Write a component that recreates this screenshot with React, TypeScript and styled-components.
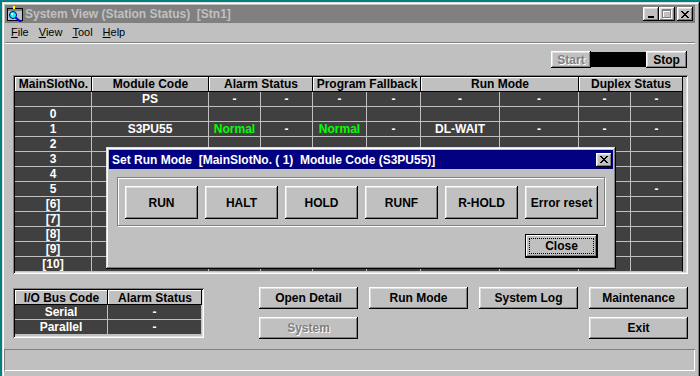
import React from 'react';
import styled, { createGlobalStyle, css } from 'styled-components';

const GlobalStyle = createGlobalStyle`
  html, body {
    margin: 0;
    padding: 0;
    background: #008080;
  }
  body {
    font-family: "Liberation Sans", Arial, sans-serif;
    font-size: 12px;
  }
  * {
    box-sizing: border-box;
  }
`;

const raised = css`
  box-shadow: inset -1px -1px #000, inset 1px 1px #fff, inset -2px -2px #808080,
    inset 2px 2px #dfdfdf;
`;

const sunken = css`
  box-shadow: inset 1px 1px #808080, inset -1px -1px #fff, inset 2px 2px #000,
    inset -2px -2px #dfdfdf;
`;

const Desktop = styled.div`
  position: relative;
  width: 700px;
  height: 376px;
  overflow: hidden;
  padding: 2px 0 0 2px;
`;

const Window = styled.div`
  width: 698px;
  height: 380px;
  padding: 3px 5px 3px 3px;
  background: #c0c0c0;
  display: flex;
  flex-direction: column;
  box-shadow: inset -1px -1px #000, inset 1px 1px #dfdfdf, inset -2px -2px #808080,
    inset 2px 2px #fff;
`;

const TitleBar = styled.div<{ $active?: boolean }>`
  height: 18px;
  flex: none;
  display: flex;
  align-items: center;
  padding-left: 2px;
  background: ${(p) => (p.$active ? '#000080' : '#808080')};
  color: ${(p) => (p.$active ? '#fff' : '#c0c0c0')};
  font-weight: bold;
  font-size: 12px;
  white-space: pre;
`;

const TitleText = styled.span`
  margin-left: 2px;
`;

const Controls = styled.div`
  margin-left: auto;
  margin-right: 2px;
  display: flex;
`;

const CtrlButton = styled.button<{ $gap?: boolean }>`
  width: 16px;
  height: 14px;
  padding: 0;
  border: none;
  background: #c0c0c0;
  display: flex;
  align-items: center;
  justify-content: center;
  margin-left: ${(p) => (p.$gap ? '2px' : '0')};
  ${raised};
`;

const MenuBar = styled.div`
  height: 19px;
  flex: none;
  display: flex;
  padding-left: 1px;
`;

const MenuItem = styled.span`
  padding: 0 5px;
  line-height: 19px;
  font-size: 11px;
  color: #000;
`;

const Mnemonic = styled.span`
  text-decoration: underline;
`;

const Separator = styled.div`
  height: 2px;
  flex: none;
  border-top: 1px solid #808080;
  border-bottom: 1px solid #fff;
`;

const Client = styled.div`
  height: 305px;
  flex: none;
  padding: 7px 2px 0 8px;
  display: flex;
  flex-direction: column;
`;

const Toolbar = styled.div`
  width: 675px;
  height: 17px;
  display: flex;
  justify-content: flex-end;
  align-items: center;
  padding-right: 1px;
`;

const WinButton = styled.button<{ $w: number; $h: number; $col?: number }>`
  width: ${(p) => p.$w}px;
  height: ${(p) => p.$h}px;
  padding: 0;
  border: none;
  background: #c0c0c0;
  color: #000;
  font-family: "Liberation Sans", Arial, sans-serif;
  font-weight: bold;
  font-size: 12px;
  grid-column: ${(p) => p.$col ?? 'auto'};
  ${raised};

  &:disabled {
    color: #808080;
    text-shadow: 1px 1px 0 #fff;
  }
`;

const Indicator = styled.div`
  width: 55px;
  height: 15px;
  background: #000;
`;

const TableFrame = styled.div`
  margin-top: 7px;
  width: 675px;
  height: 199px;
  padding: 2px;
  background: #c0c0c0;
  ${sunken};
`;

const Grid = styled.div<{ $cols: string }>`
  display: grid;
  grid-template-columns: ${(p) => p.$cols};
  grid-auto-rows: 15px;
`;

const HeadCell = styled.div<{ $span?: number }>`
  grid-column: span ${(p) => p.$span ?? 1};
  background: #c0c0c0;
  color: #000;
  font-weight: bold;
  font-size: 12px;
  line-height: 15px;
  text-align: center;
  white-space: nowrap;
  overflow: hidden;
  box-shadow: inset -1px -1px #000, inset 1px 1px #fff;
`;

const DataCell = styled.div<{ $ok?: boolean; $edge?: boolean }>`
  background: #404040;
  color: ${(p) => (p.$ok ? '#00ff00' : '#fff')};
  border-right: 1px solid ${(p) => (p.$edge ? '#000' : '#c0c0c0')};
  border-bottom: 1px solid #c0c0c0;
  font-weight: bold;
  font-size: 12px;
  line-height: 14px;
  text-align: center;
  white-space: nowrap;
`;

const Bottom = styled.div`
  width: 675px;
  margin-top: 13px;
  display: flex;
  justify-content: space-between;
  align-items: flex-start;
`;

const IoFrame = styled.div`
  margin-top: 1px;
  width: 191px;
  height: 50px;
  padding: 2px;
  background: #c0c0c0;
  ${sunken};
`;

const IoHead = styled(HeadCell)`
  line-height: 16px;
`;

const ButtonGrid = styled.div`
  display: grid;
  grid-template-columns: repeat(4, 99px);
  grid-auto-rows: 22px;
  column-gap: 11px;
  row-gap: 8px;
`;

const StatusBar = styled.div`
  height: 22px;
  flex: none;
  margin-left: -1px;
  box-shadow: inset 1px 1px #808080, inset -1px -1px #fff;
`;

const Dialog = styled.div`
  position: absolute;
  left: 106px;
  top: 147px;
  width: 510px;
  height: 122px;
  padding: 3px;
  background: #c0c0c0;
  display: flex;
  flex-direction: column;
  box-shadow: inset -1px -1px #000, inset 1px 1px #dfdfdf, inset -2px -2px #808080,
    inset 2px 2px #fff;
`;

const DialogTitle = styled(TitleBar)`
  height: 19px;
  padding-left: 3px;
`;

const DialogClose = styled(CtrlButton)`
  margin-left: auto;
  margin-right: 1px;
`;

const GroupBox = styled.div`
  margin: 8px 8px 0;
  padding: 8px 6px 6px 7px;
  border: 1px solid #808080;
  box-shadow: 1px 1px 0 #fff, inset 1px 1px 0 #fff;
  display: flex;
  gap: 7px;
`;

const DialogFooter = styled.div`
  margin: 8px 15px 0 0;
  display: flex;
  justify-content: flex-end;
`;

const DefaultButton = styled.button`
  width: 73px;
  height: 24px;
  padding: 3px;
  border: 1px solid #000;
  background: #c0c0c0;
  display: flex;
  box-shadow: inset -1px -1px #000, inset 1px 1px #fff, inset -2px -2px #808080;
`;

const FocusLabel = styled.span`
  flex: 1;
  display: flex;
  align-items: center;
  justify-content: center;
  border: 1px dotted #000;
  font-family: "Liberation Sans", Arial, sans-serif;
  font-weight: bold;
  font-size: 12px;
  color: #000;
`;

const X_PATTERN = ['11....11', '.11..11.', '..1111..', '...11...', '..1111..', '.11..11.', '11....11'];

const CloseGlyph = () => (
  <svg width="8" height="7" shapeRendering="crispEdges">
    {X_PATTERN.flatMap((row, y) =>
      row.split('').map((c, x) => (c === '1' ? <rect key={`${x}-${y}`} x={x} y={y} width="1" height="1" fill="#000" /> : null))
    )}
  </svg>
);

const MinGlyph = () => (
  <svg width="8" height="7" shapeRendering="crispEdges">
    <rect x="1" y="5" width="6" height="2" fill="#000" />
  </svg>
);

const MaxGlyph = () => (
  <svg width="10" height="10" shapeRendering="crispEdges">
    <g fill="#fff" transform="translate(1 1)">
      <rect x="0" y="0" width="9" height="2" />
      <rect x="0" y="0" width="1" height="9" />
      <rect x="8" y="0" width="1" height="9" />
      <rect x="0" y="8" width="9" height="1" />
    </g>
    <g fill="#808080">
      <rect x="0" y="0" width="9" height="2" />
      <rect x="0" y="0" width="1" height="9" />
      <rect x="8" y="0" width="1" height="9" />
      <rect x="0" y="8" width="9" height="1" />
    </g>
  </svg>
);

const AppIcon = () => (
  <svg width="16" height="16" shapeRendering="crispEdges">
    <rect x="0.5" y="2.5" width="15" height="12" fill="#c0c0c0" stroke="#000" />
    <rect x="1" y="3" width="14" height="2" fill="#808080" />
    <rect x="6" y="0" width="2" height="3" fill="#ffff00" />
    <circle cx="6" cy="9" r="3.5" fill="#00ffff" stroke="#000080" shapeRendering="auto" />
    <rect x="4" y="7" width="2" height="2" fill="#fff" />
    <line x1="8.5" y1="11.5" x2="14" y2="16" stroke="#0000ff" strokeWidth="2" shapeRendering="auto" />
  </svg>
);

const MAIN_COLS = '77px 117px 52px 52px 54px 54px 79px 79px 52px 52px';

const blank = ['', '', '', '', '', '', '', ''];

const rows: string[][] = [
  ['', 'PS', '-', '-', '-', '-', '-', '-', '-', '-'],
  ['0', '', ...blank],
  ['1', 'S3PU55', 'Normal', '-', 'Normal', '-', 'DL-WAIT', '-', '-', '-'],
  ['2', '', ...blank],
  ['3', '', ...blank],
  ['4', '', ...blank],
  ['5', '', '', '', '', '', '', '', '', '-'],
  ['[6]', '', ...blank],
  ['[7]', '', ...blank],
  ['[8]', '', ...blank],
  ['[9]', '', ...blank],
  ['[10]', '', ...blank],
];

const modes = ['RUN', 'HALT', 'HOLD', 'RUNF', 'R-HOLD', 'Error reset'];

const App: React.FC = () => {
  return (
    <>
      <GlobalStyle />
      <Desktop>
        <Window>
          <TitleBar>
            <AppIcon />
            <TitleText>System View (Station Status)  [Stn1]</TitleText>
            <Controls>
              <CtrlButton>
                <MinGlyph />
              </CtrlButton>
              <CtrlButton>
                <MaxGlyph />
              </CtrlButton>
              <CtrlButton $gap>
                <CloseGlyph />
              </CtrlButton>
            </Controls>
          </TitleBar>

          <MenuBar>
            <MenuItem>
              <Mnemonic>F</Mnemonic>ile
            </MenuItem>
            <MenuItem>
              <Mnemonic>V</Mnemonic>iew
            </MenuItem>
            <MenuItem>
              <Mnemonic>T</Mnemonic>ool
            </MenuItem>
            <MenuItem>
              <Mnemonic>H</Mnemonic>elp
            </MenuItem>
          </MenuBar>
          <Separator />

          <Client>
            <Toolbar>
              <WinButton $w={40} $h={17} disabled>
                Start
              </WinButton>
              <Indicator />
              <WinButton $w={41} $h={17}>
                Stop
              </WinButton>
            </Toolbar>

            <TableFrame>
              <Grid $cols={MAIN_COLS}>
                <HeadCell>MainSlotNo.</HeadCell>
                <HeadCell>Module Code</HeadCell>
                <HeadCell $span={2}>Alarm Status</HeadCell>
                <HeadCell $span={2}>Program Fallback</HeadCell>
                <HeadCell $span={2}>Run Mode</HeadCell>
                <HeadCell $span={2}>Duplex Status</HeadCell>
                {rows.map((row, r) =>
                  row.map((v, c) => (
                    <DataCell key={`${r}-${c}`} $ok={v === 'Normal'} $edge={c === 9}>
                      {v}
                    </DataCell>
                  ))
                )}
              </Grid>
            </TableFrame>

            <Bottom>
              <IoFrame>
                <Grid $cols="93px 94px">
                  <IoHead>I/O Bus Code</IoHead>
                  <IoHead>Alarm Status</IoHead>
                  <DataCell>Serial</DataCell>
                  <DataCell>-</DataCell>
                  <DataCell>Parallel</DataCell>
                  <DataCell>-</DataCell>
                </Grid>
              </IoFrame>

              <ButtonGrid>
                <WinButton $w={99} $h={22}>Open Detail</WinButton>
                <WinButton $w={99} $h={22}>Run Mode</WinButton>
                <WinButton $w={99} $h={22}>System Log</WinButton>
                <WinButton $w={99} $h={22}>Maintenance</WinButton>
                <WinButton $w={99} $h={22} $col={1} disabled>
                  System
                </WinButton>
                <WinButton $w={99} $h={22} $col={4}>
                  Exit
                </WinButton>
              </ButtonGrid>
            </Bottom>
          </Client>

          <StatusBar />
        </Window>

        <Dialog>
          <DialogTitle $active>
            Set Run Mode  [MainSlotNo. ( 1)  Module Code (S3PU55)]
            <DialogClose>
              <CloseGlyph />
            </DialogClose>
          </DialogTitle>
          <GroupBox>
            {modes.map((m) => (
              <WinButton key={m} $w={73} $h={33}>
                {m}
              </WinButton>
            ))}
          </GroupBox>
          <DialogFooter>
            <DefaultButton>
              <FocusLabel>Close</FocusLabel>
            </DefaultButton>
          </DialogFooter>
        </Dialog>
      </Desktop>
    </>
  );
};

export default App;
